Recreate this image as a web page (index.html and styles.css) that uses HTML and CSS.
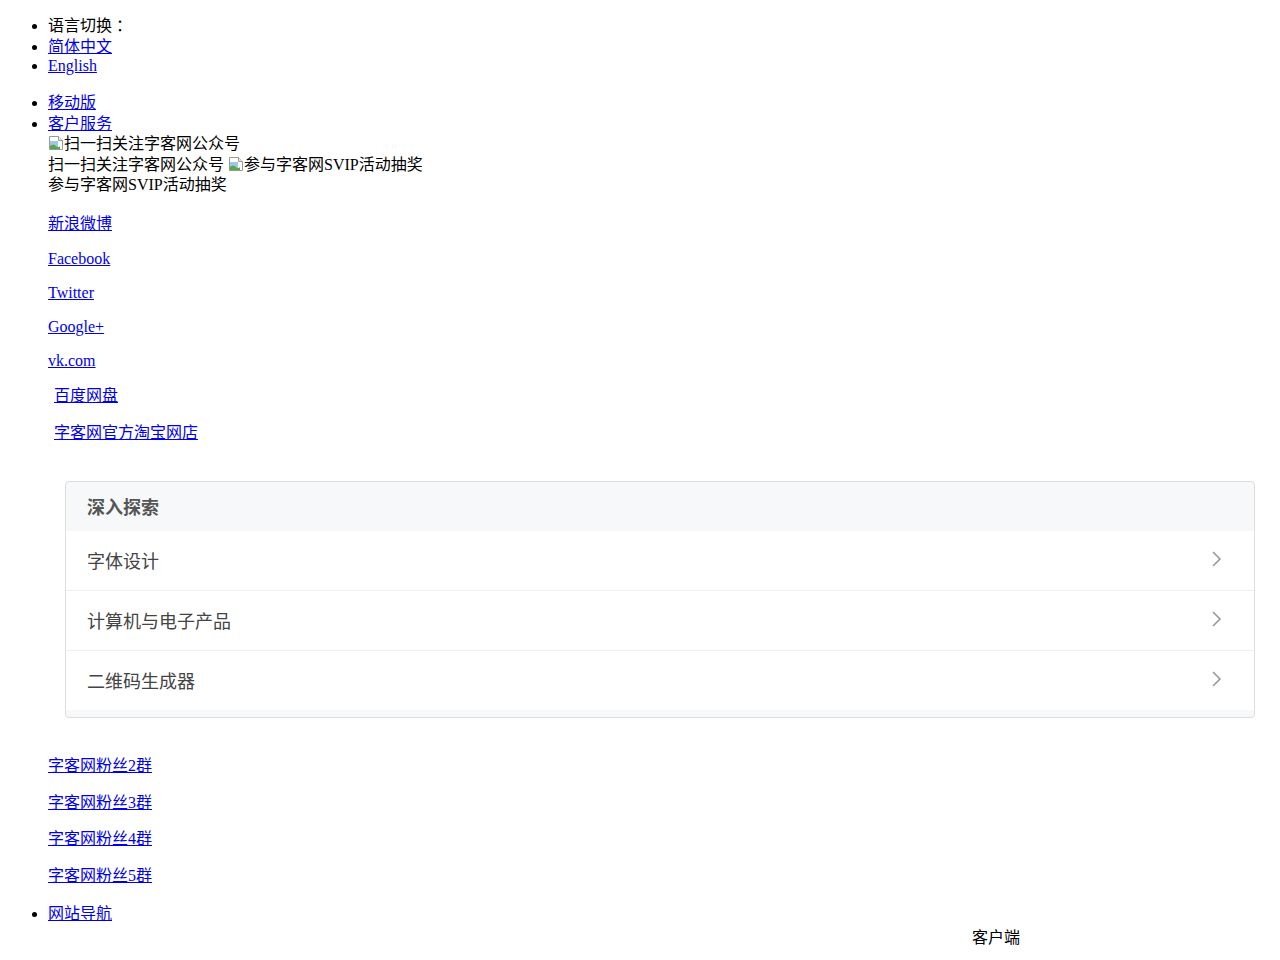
FILE: index.html
```html
<!DOCTYPE html>
<html lang="zh-CN">
<head>
    <meta charset="UTF-8">
    <title>字客网</title>
    <link rel="stylesheet" href="styles.css">
</head>
<body>
    <ul class="lang">
        <li>语言切换<span class="colon">：</span></li>
        <li><a href="#">简体中文</a></li>
        <li class="latin"><a href="#">English</a></li>
    </ul>
    <ul>
        <li><a href="#">移动版</a></li>
        <li>
            <a href="#">客户服务</a>
            <div class="qr">
                <span class="broken"><svg width="16" height="16" viewBox="0 0 16 16"><path d="M1.5 1.5h9l4 4v9h-13z" fill="#fff" stroke="#999"/><path d="M10.5 1.5v4h4" fill="#eee" stroke="#999"/><path d="M2 6h8v8H2z" fill="#9cc7ec"/><path d="M2 14v-3c2-2 4-2 6 0s3 1 4 0v3z" fill="#5aa74a"/></svg>扫一扫关注字客网公众号</span><br>
                扫一扫关注字客网公众号
                <span class="broken"><svg width="16" height="16" viewBox="0 0 16 16"><path d="M1.5 1.5h9l4 4v9h-13z" fill="#fff" stroke="#999"/><path d="M10.5 1.5v4h4" fill="#eee" stroke="#999"/><path d="M2 6h8v8H2z" fill="#9cc7ec"/><path d="M2 14v-3c2-2 4-2 6 0s3 1 4 0v3z" fill="#5aa74a"/></svg>参与字客网SVIP活动抽奖</span><br>
                参与字客网SVIP活动抽奖
            </div>
            <p><a href="#">新浪微博</a></p>
            <p class="latin"><a href="#">Facebook</a></p>
            <p class="latin"><a href="#">Twitter</a></p>
            <p class="latin"><a href="#">Google+</a></p>
            <p class="latin"><a href="#">vk.com</a></p>
            <p class="shop"><a href="#">百度网盘</a></p>
            <p class="shop"><a href="#">字客网官方淘宝网店</a></p>

            <div class="explore">
                <div class="explore-title">深入探索</div>
                <a class="explore-item" href="#">字体设计<svg class="chev" width="12" height="18" viewBox="0 0 12 18"><path d="M3 2l7 7-7 7" fill="none" stroke="#999" stroke-width="1.6"/></svg></a>
                <a class="explore-item" href="#">计算机与电子产品<svg class="chev" width="12" height="18" viewBox="0 0 12 18"><path d="M3 2l7 7-7 7" fill="none" stroke="#999" stroke-width="1.6"/></svg></a>
                <a class="explore-item" href="#">二维码生成器<svg class="chev" width="12" height="18" viewBox="0 0 12 18"><path d="M3 2l7 7-7 7" fill="none" stroke="#999" stroke-width="1.6"/></svg></a>
            </div>

            <p><a href="#">字客网粉丝2群</a></p>
            <p><a href="#">字客网粉丝3群</a></p>
            <p><a href="#">字客网粉丝4群</a></p>
            <p><a href="#">字客网粉丝5群</a></p>
        </li>
        <li class="nav">
            <a href="#">网站导航</a>
            <div class="client">客户端</div>
        </li>
    </ul>
</body>
</html>
```

FILE: styles.css
```css
body {
    font-family: "Liberation Serif", "Noto Sans CJK SC", serif;
    font-size: 16px;
    line-height: 20.5px;
}
a {
    color: #0000ee;
}
.lang {
    margin-top: 8px;
    margin-bottom: 18px;
}
.latin {
    line-height: 18px;
}
.colon {
    padding-left: 4px;
}
.qr {
    padding-bottom: 2px;
}
.broken svg {
    vertical-align: -2px;
}
.shop {
    padding-left: 6px;
}
.explore {
    margin: 38px 17px 38px;
    border: 1px solid #dddddd;
    border-radius: 4px;
    background: #f7f8fa;
    padding-bottom: 7px;
    font-family: "Noto Sans CJK SC", sans-serif;
}
.explore-title {
    height: 49px;
    line-height: 49px;
    padding: 0 21px;
    font-size: 18px;
    font-weight: bold;
    color: #555555;
}
.explore-item {
    display: flex;
    justify-content: space-between;
    align-items: center;
    height: 59px;
    padding: 0 32px 0 21px;
    background: #ffffff;
    border-bottom: 1px solid #f0f0f0;
    font-size: 18px;
    color: #444444;
    text-decoration: none;
}
.explore-item:last-child {
    border-bottom: none;
}
.chev {
    margin-top: -3px;
}
.nav {
    margin-top: 18px;
}
.client {
    margin-top: 1px;
    padding-right: 252px;
    text-align: right;
    font-family: "Noto Sans CJK SC", sans-serif;
    font-size: 16px;
    color: #000000;
}
```
